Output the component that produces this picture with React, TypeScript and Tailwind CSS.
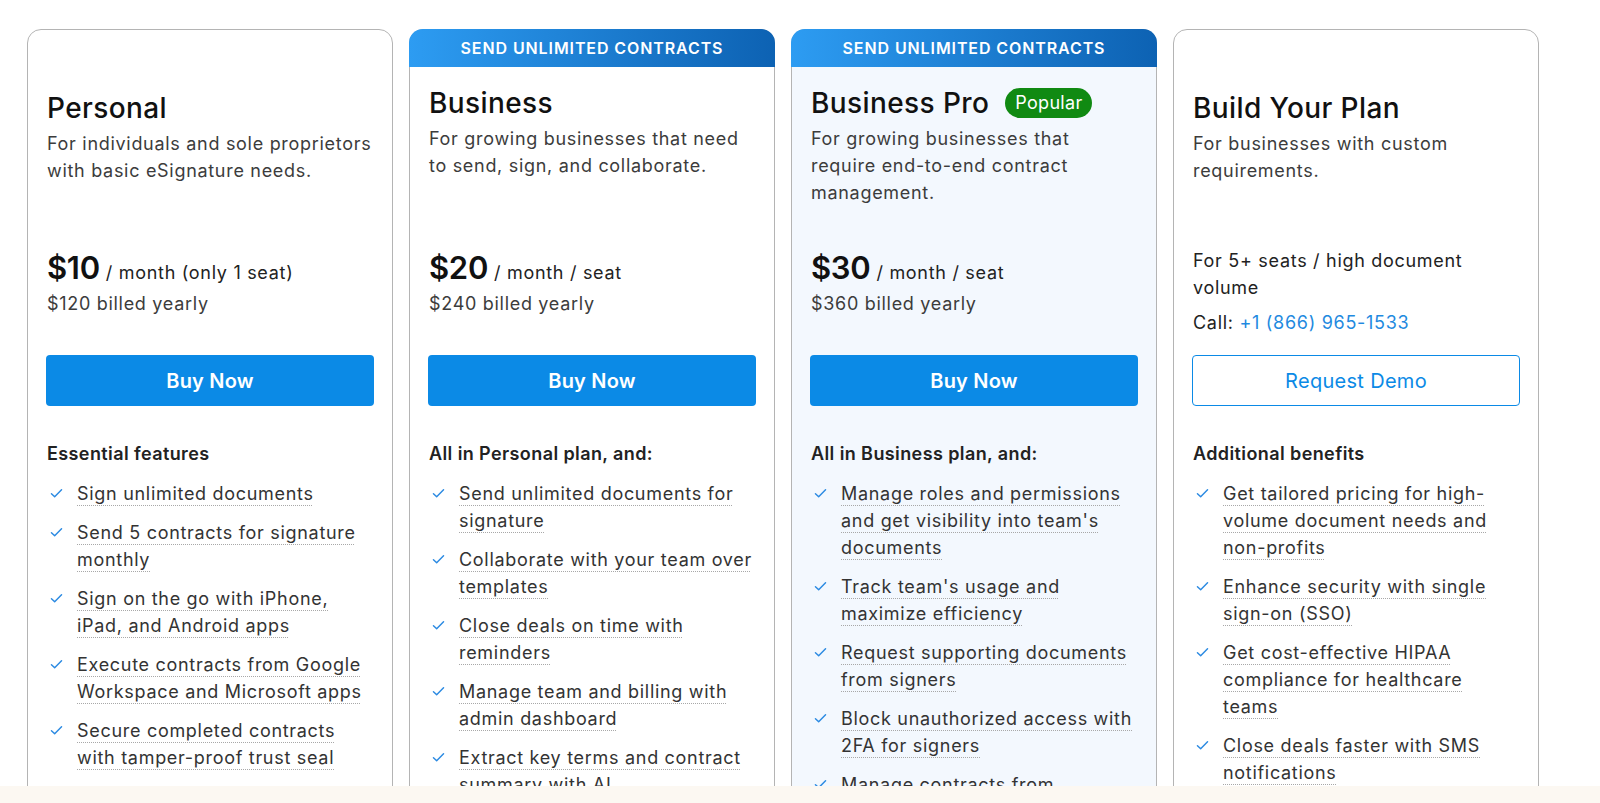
import React from 'react'

type Plan = {
  name: string
  banner?: boolean
  popular?: boolean
  tinted?: boolean
  desc: string
  price?: string
  unit?: string
  billed?: string
  custom?: boolean
  cta: string
  heading: string
  features: string[]
}

const plans: Plan[] = [
  {
    name: 'Personal',
    desc: 'For individuals and sole proprietors with basic eSignature needs.',
    price: '$10',
    unit: '/ month (only 1 seat)',
    billed: '$120 billed yearly',
    cta: 'Buy Now',
    heading: 'Essential features',
    features: [
      'Sign unlimited documents',
      'Send 5 contracts for signature monthly',
      'Sign on the go with iPhone, iPad, and Android apps',
      'Execute contracts from Google Workspace and Microsoft apps',
      'Secure completed contracts with tamper-proof trust seal',
    ],
  },
  {
    name: 'Business',
    banner: true,
    desc: 'For growing businesses that need to send, sign, and collaborate.',
    price: '$20',
    unit: '/ month / seat',
    billed: '$240 billed yearly',
    cta: 'Buy Now',
    heading: 'All in Personal plan, and:',
    features: [
      'Send unlimited documents for signature',
      'Collaborate with your team over templates',
      'Close deals on time with reminders',
      'Manage team and billing with admin dashboard',
      'Extract key terms and contract summary with AI',
    ],
  },
  {
    name: 'Business Pro',
    banner: true,
    popular: true,
    tinted: true,
    desc: 'For growing businesses that require end-to-end contract management.',
    price: '$30',
    unit: '/ month / seat',
    billed: '$360 billed yearly',
    cta: 'Buy Now',
    heading: 'All in Business plan, and:',
    features: [
      "Manage roles and permissions and get visibility into team's documents",
      "Track team's usage and maximize efficiency",
      'Request supporting documents from signers',
      'Block unauthorized access with 2FA for signers',
      'Manage contracts from anywhere',
    ],
  },
  {
    name: 'Build Your Plan',
    custom: true,
    desc: 'For businesses with custom requirements.',
    cta: 'Request Demo',
    heading: 'Additional benefits',
    features: [
      'Get tailored pricing for high-volume document needs and non-profits',
      'Enhance security with single sign-on (SSO)',
      'Get cost-effective HIPAA compliance for healthcare teams',
      'Close deals faster with SMS notifications',
    ],
  },
]

function Check() {
  return (
    <svg viewBox="0 0 14 12" className="w-[13px] h-[11px] mt-[8px] shrink-0" fill="none">
      <path d="M1.5 6.2 L5 9.5 L12.5 2" stroke="#2b8ae2" strokeWidth="1.6" strokeLinecap="round" strokeLinejoin="round" />
    </svg>
  )
}

function PlanCard({ plan }: { plan: Plan }) {
  return (
    <div
      className={`flex flex-col rounded-[14px] border border-[#b4b4b4] min-h-[800px] ${
        plan.tinted ? 'bg-[#f3f8fe]' : 'bg-white'
      }`}
    >
      {plan.banner && (
        <div className="shrink-0 h-[38px] -mx-px -mt-px rounded-t-[14px] flex items-center justify-center bg-gradient-to-r from-[#2d9cf2] to-[#0d62b3] text-white text-[16px] font-semibold tracking-[0.9px]">
          SEND UNLIMITED CONTRACTS
        </div>
      )}

      <div className={`shrink-0 px-[19px] ${plan.banner ? 'pt-[18px] h-[173px]' : 'pt-[60px] h-[210px]'}`}>
        <div className="flex items-center gap-4 h-[36px]">
          <h2 className="text-[28px] leading-[36px] font-medium text-[#111] tracking-[0.4px]">{plan.name}</h2>
          {plan.popular && (
            <span className="bg-[#108a12] text-white text-[18px] leading-[30px] px-[10px] rounded-full tracking-[0.3px]">
              Popular
            </span>
          )}
        </div>
        <p className="mt-[4px] text-[18px] leading-[27px] text-[#3c3c3c] tracking-[0.7px]">{plan.desc}</p>
      </div>

      <div className="shrink-0 px-[18px] h-[115px]">
        {plan.custom ? (
          <div className="pt-[7px] pl-[1px] text-[18px] leading-[27px] text-[#222] tracking-[0.7px]">
            <p>For 5+ seats / high document volume</p>
            <p className="mt-[8px]">
              Call: <span className="text-[#1f8ae0]">+1 (866) 965-1533</span>
            </p>
          </div>
        ) : (
          <div className="pt-[10px] pl-[1px]">
            <div className="flex items-baseline gap-[6px] h-[36px]">
              <span className="text-[31px] leading-[36px] font-semibold text-[#111] tracking-[-0.3px]">{plan.price}</span>
              <span className="text-[18px] text-[#222] tracking-[0.7px]">{plan.unit}</span>
            </div>
            <p className="mt-[4px] text-[18px] leading-[27px] text-[#3c3c3c] tracking-[0.7px]">{plan.billed}</p>
          </div>
        )}
      </div>

      <div className="shrink-0 px-[18px]">
        {plan.custom ? (
          <button className="w-full h-[51px] rounded-[4px] border border-[#0b8ae6] bg-white text-[#0b8ae6] text-[20px] tracking-[0.3px]">
            {plan.cta}
          </button>
        ) : (
          <button className="w-full h-[51px] rounded-[4px] bg-[#0b8ae6] text-white text-[20px] font-semibold tracking-[0.2px]">
            {plan.cta}
          </button>
        )}
      </div>

      <div className="shrink-0 px-[19px] pt-[34px]">
        <h3 className="text-[18px] leading-[27px] font-semibold text-[#222] tracking-[0.4px]">{plan.heading}</h3>
        <ul className="mt-[13px] flex flex-col gap-3">
          {plan.features.map((f) => (
            <li key={f} className="flex gap-[14px] pl-[3px]">
              <Check />
              <span className="text-[18px] leading-[27px] text-[#333] tracking-[0.7px] underline decoration-dotted decoration-[#a8a8a8] underline-offset-[5px] decoration-1">
                {f}
              </span>
            </li>
          ))}
        </ul>
      </div>
    </div>
  )
}

export default function App() {
  return (
    <div className="w-[1600px] h-[803px] overflow-hidden flex flex-col bg-white font-['Inter','Liberation_Sans',sans-serif]">
      <div className="h-[786px] shrink-0 overflow-hidden pl-[27px] pt-[29px]">
        <div className="grid grid-cols-[366px_366px_366px_366px] gap-4">
          {plans.map((p) => (
            <PlanCard key={p.name} plan={p} />
          ))}
        </div>
      </div>
      <div className="flex-1 bg-[#fcf8f2]" />
    </div>
  )
}
